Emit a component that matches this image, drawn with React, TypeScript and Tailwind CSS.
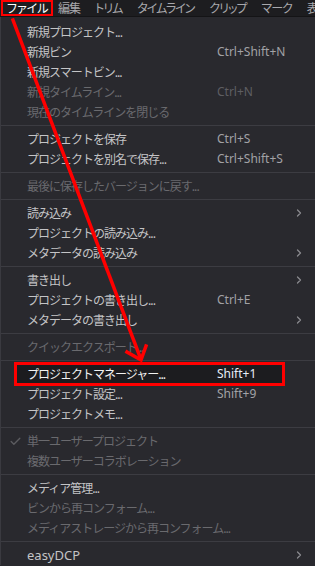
import { Check, ChevronRight } from 'lucide-react';

type Item =
    | { kind: 'sep' }
    | {
          kind?: 'item';
          label: string;
          shortcut?: string;
          disabled?: boolean;
          submenu?: boolean;
          checked?: boolean;
          active?: boolean;
      };

const menuBar = ['ファイル', '編集', 'トリム', 'タイムライン', 'クリップ', 'マーク', '表示'];

const items: Item[] = [
    { label: '新規プロジェクト...' },
    { label: '新規ビン', shortcut: 'Ctrl+Shift+N' },
    { label: '新規スマートビン...' },
    { label: '新規タイムライン...', shortcut: 'Ctrl+N', disabled: true },
    { label: '現在のタイムラインを閉じる', disabled: true },
    { kind: 'sep' },
    { label: 'プロジェクトを保存', shortcut: 'Ctrl+S' },
    { label: 'プロジェクトを別名で保存...', shortcut: 'Ctrl+Shift+S' },
    { kind: 'sep' },
    { label: '最後に保存したバージョンに戻す...', disabled: true },
    { kind: 'sep' },
    { label: '読み込み', submenu: true },
    { label: 'プロジェクトの読み込み...' },
    { label: 'メタデータの読み込み', submenu: true },
    { kind: 'sep' },
    { label: '書き出し', submenu: true },
    { label: 'プロジェクトの書き出し...', shortcut: 'Ctrl+E' },
    { label: 'メタデータの書き出し', submenu: true },
    { kind: 'sep' },
    { label: 'クイックエクスポート...', disabled: true },
    { kind: 'sep' },
    { label: 'プロジェクトマネージャー...', shortcut: 'Shift+1', active: true },
    { label: 'プロジェクト設定...', shortcut: 'Shift+9' },
    { label: 'プロジェクトメモ...' },
    { kind: 'sep' },
    { label: '単一ユーザープロジェクト', disabled: true, checked: true },
    { label: '複数ユーザーコラボレーション', disabled: true },
    { kind: 'sep' },
    { label: 'メディア管理...' },
    { label: 'ビンから再コンフォーム...', disabled: true },
    { label: 'メディアストレージから再コンフォーム...', disabled: true },
    { kind: 'sep' },
    { label: 'easyDCP', submenu: true },
];

// Japanese labels get tighter tracking, plain latin labels keep normal spacing
const isJapanese = (s: string) => /[^\x00-\x7f]/.test(s);

const MenuRow = ({ item }: { item: Exclude<Item, { kind: 'sep' }> }) => (
    <div className="relative flex items-center h-5 pl-[26px] pr-[10px]">
        {/* annotation box around the highlighted entry */}
        {item.active && (
            <div className="absolute left-[13px] right-[30px] -top-[2px] -bottom-[2px] bg-[#1c1c1f] border-[3px] border-[#ff0000]" />
        )}
        {item.checked && (
            <Check className="absolute left-[8px] top-[4px] text-[#5c5c60]" size={13} strokeWidth={2.5} />
        )}
        <span
            className={`relative w-[190px] shrink-0 whitespace-nowrap ${
                isJapanese(item.label) ? 'tracking-[-1px]' : "font-['Noto_Sans',sans-serif] text-[13px]"
            } ${item.active ? 'text-[#f2f2f2]' : item.disabled ? 'text-[#6a6a6e]' : 'text-[#c4c4c6]'}`}
        >
            {item.label}
        </span>
        {item.shortcut && (
            <span
                className={`relative whitespace-nowrap font-['Noto_Sans',sans-serif] ${
                    item.active ? 'text-[#e8eef8]' : item.disabled ? 'text-[#5e5e62]' : 'text-[#a2a2a6]'
                }`}
            >
                {item.shortcut}
            </span>
        )}
        {item.submenu && <ChevronRight className="ml-auto text-[#8a8a8e]" size={12} strokeWidth={2.5} />}
    </div>
);

export default function App() {
    return (
        <div className="relative w-[315px] h-[566px] overflow-hidden bg-[#29292e] text-[12px] font-['Noto_Sans_CJK_JP','Noto_Sans',sans-serif] leading-5">
            {/* menu bar */}
            <div className="flex items-center h-[17px] bg-[#1d1d20] border-b border-[#141416] whitespace-nowrap [font-feature-settings:'palt']">
                {menuBar.map((name, i) => (
                    <div
                        key={name}
                        className={
                            i === 0
                                ? 'ml-[1px] h-[16px] w-[52px] pl-[4px] border-2 border-[#ff0000] text-white leading-[12px] flex items-center shrink-0'
                                : `${i === 1 ? 'ml-[5px]' : 'ml-[15px]'} shrink-0 tracking-[-1px] text-[#a8a8ac] leading-[16px]`
                        }
                    >
                        {name}
                    </div>
                ))}
            </div>

            {/* dropdown */}
            <div className="pt-[5px] border-l border-[#3a3a40]">
                {items.map((item, i) =>
                    item.kind === 'sep' ? (
                        <div key={i} className="my-[3px] h-px bg-[#3c3c42]" />
                    ) : (
                        <MenuRow key={i} item={item} />
                    )
                )}
            </div>

            {/* red annotation arrow */}
            <svg className="absolute left-0 top-0 pointer-events-none" width="315" height="566">
                <g stroke="#ff0000" strokeWidth="3.5" strokeLinecap="square" fill="none">
                    <line x1="13" y1="20" x2="140" y2="357" />
                    <polyline points="127,352 141,360 146,346" strokeLinejoin="miter" />
                </g>
            </svg>
        </div>
    );
}
